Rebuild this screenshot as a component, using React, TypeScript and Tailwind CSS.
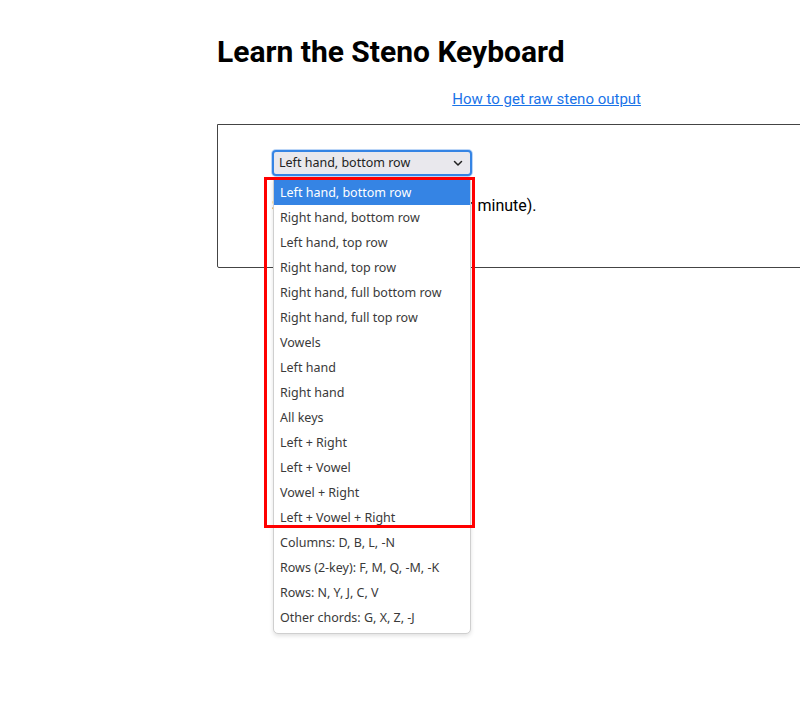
import React from "react";

const options = [
  "Left hand, bottom row",
  "Right hand, bottom row",
  "Left hand, top row",
  "Right hand, top row",
  "Right hand, full bottom row",
  "Right hand, full top row",
  "Vowels",
  "Left hand",
  "Right hand",
  "All keys",
  "Left + Right",
  "Left + Vowel",
  "Vowel + Right",
  "Left + Vowel + Right",
  "Columns: D, B, L, -N",
  "Rows (2-key): F, M, Q, -M, -K",
  "Rows: N, Y, J, C, V",
  "Other chords: G, X, Z, -J",
];

const App: React.FC = () => {
  return (
    <div className="relative min-h-[717px] w-[800px] overflow-hidden bg-white font-['Roboto',sans-serif] text-black">
      <div className="pl-[217px] pt-[33px]">
        <h1 className="text-[30px] font-bold leading-[37px]">Learn the Steno Keyboard</h1>

        <div className="mt-[20px] w-[424px] text-right text-[15px] leading-[19px]">
          <a href="#" className="text-[#1a73e8] underline">
            How to get raw steno output
          </a>
        </div>

        {/* practice panel */}
        <div className="mt-[15px] h-[144px] w-[640px] rounded-bl-[2px] border border-[#444] pl-[54px] pt-[25px]">
          <div className="relative w-[200px]">
            {/* select */}
            <div className="flex h-[26px] items-center justify-between rounded-[4px] border-2 border-[#3584e4] bg-[#e9e8ed] pl-[5px] pr-[5px] font-['Noto_Sans',sans-serif] text-[12.5px] text-[#222] ring-1 ring-[#bcd6f7]">
              <span>Left hand, bottom row</span>
              <svg width="12" height="12" viewBox="0 0 12 12" fill="none" className="mr-[1px]">
                <path d="M2.5 4.5 L6 8 L9.5 4.5" stroke="#222" strokeWidth="1.5" strokeLinecap="round" strokeLinejoin="round" />
              </svg>
            </div>

            <p className="mt-[20px] whitespace-nowrap text-[16px] leading-[19px]">Speed: 000 WPM (words per minute).</p>

            {/* open dropdown list */}
            <div className="absolute left-[1px] top-[29px] z-10 w-[198px] rounded-b-[5px] border border-[#cfcfcf] bg-white pb-[3px] font-['Noto_Sans',sans-serif] text-[12.5px] text-[#3a3a3a] shadow-[0_2px_4px_rgba(0,0,0,0.12)]">
              {options.map((opt, i) => (
                <div
                  key={opt}
                  className={
                    i === 0
                      ? "h-[25px] bg-[#3584e4] pl-[6px] leading-[25px] text-white"
                      : "h-[25px] pl-[6px] leading-[25px]"
                  }
                >
                  {opt}
                </div>
              ))}
            </div>
          </div>
        </div>
      </div>

      {/* red annotation box */}
      <div className="pointer-events-none absolute left-[264px] top-[177px] z-20 h-[351px] w-[211px] border-[3px] border-[#ff0000]" />
    </div>
  );
};

export default App;
